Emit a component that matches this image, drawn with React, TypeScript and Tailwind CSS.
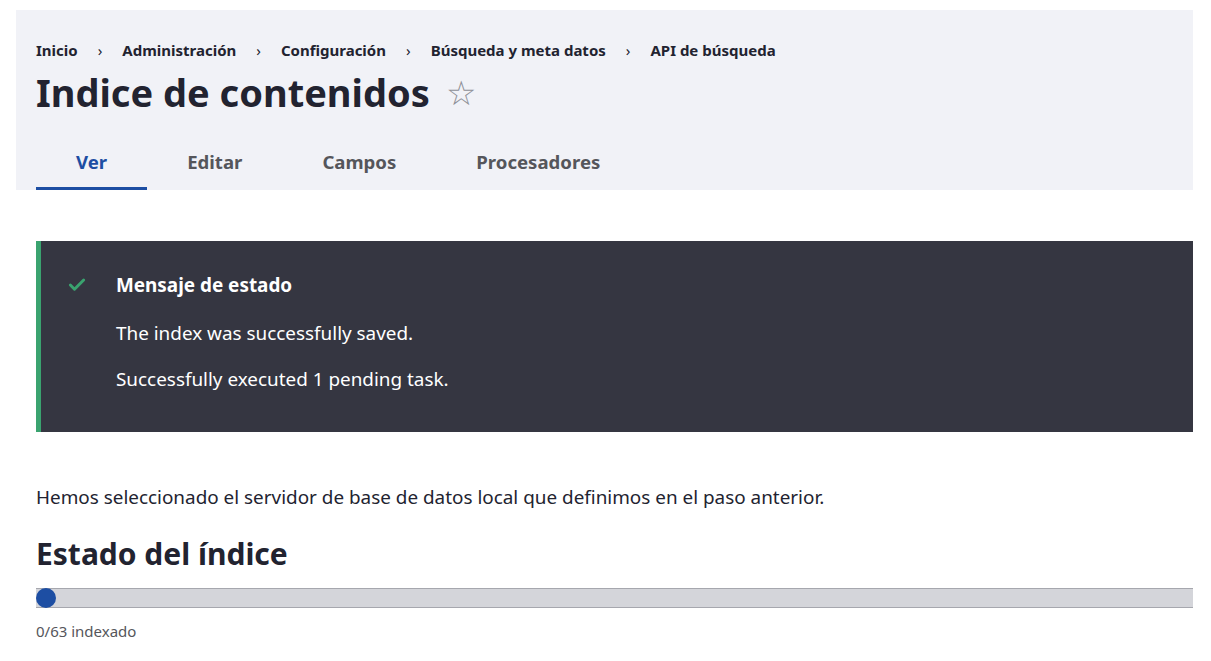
import { Check } from "lucide-react";

const crumbs = [
    "Inicio",
    "Administración",
    "Configuración",
    "Búsqueda y meta datos",
    "API de búsqueda",
];

const tabs = ["Ver", "Editar", "Campos", "Procesadores"];

function Breadcrumb() {
    return (
        <nav className="flex items-center text-[15px] font-bold text-[#222330] leading-5">
            {crumbs.map((c, i) => (
                <div key={c} className="flex items-center">
                    {i > 0 && <span className="px-5 font-normal">›</span>}
                    <span>{c}</span>
                </div>
            ))}
        </nav>
    );
}

function Tabs() {
    return (
        <div className="flex mt-[26px]">
            {tabs.map((t, i) => (
                <div
                    key={t}
                    className={
                        i === 0
                            ? "px-10 pt-[5px] pb-[11px] text-[18.6px] font-bold text-[#1d4ea3] border-b-[3px] border-[#1d4ea3]"
                            : "px-10 pt-[5px] pb-[11px] text-[18.6px] font-bold text-[#55565b] border-b-[3px] border-transparent"
                    }
                >
                    {t}
                </div>
            ))}
        </div>
    );
}

function StatusMessage() {
    return (
        <div className="flex bg-[#353641] border-l-[5px] border-[#3aa36f] text-white">
            <div className="pl-[26px] pt-[34px] w-[75px]">
                <Check className="w-5 h-5 text-[#3aa36f]" strokeWidth={3.5} />
            </div>
            <div className="pt-[32px] pb-[41px] text-[18.9px] leading-6">
                <div className="font-bold">Mensaje de estado</div>
                <div className="mt-[24px]">The index was successfully saved.</div>
                <div className="mt-[22px]">Successfully executed 1 pending task.</div>
            </div>
        </div>
    );
}

export default function App() {
    return (
        <div className="min-h-screen bg-white pt-[10px] pl-4 pr-[18px] font-['Noto_Sans',sans-serif] text-[#222330]">
            <header className="bg-[#f1f2f7] px-5 pt-[30px]">
                <Breadcrumb />
                <div className="flex items-center mt-[7px]">
                    <h1 className="text-[38px] font-bold leading-[50px] text-[#222330]">
                        Indice de contenidos
                    </h1>
                    <span className="ml-4 text-[34px] leading-none text-[#8e9098]">☆</span>
                </div>
                <Tabs />
            </header>
            <main className="pl-5">
                <div className="mt-[51px]">
                    <StatusMessage />
                </div>
                <p className="mt-[53px] text-[18.9px] leading-6">
                    Hemos seleccionado el servidor de base de datos local que definimos en el paso anterior.
                </p>
                <h2 className="mt-[25px] text-[30px] font-bold leading-10">Estado del índice</h2>
                <div className="mt-[14px] relative h-[20px] bg-[#d4d5da] border-y border-[#a6a7ae]">
                    <div className="absolute left-0 top-[-1px] w-5 h-5 rounded-full bg-[#1d4ea3]" />
                </div>
                <div className="mt-[12px] text-[15px] text-[#55565b]">0/63 indexado</div>
            </main>
        </div>
    );
}
